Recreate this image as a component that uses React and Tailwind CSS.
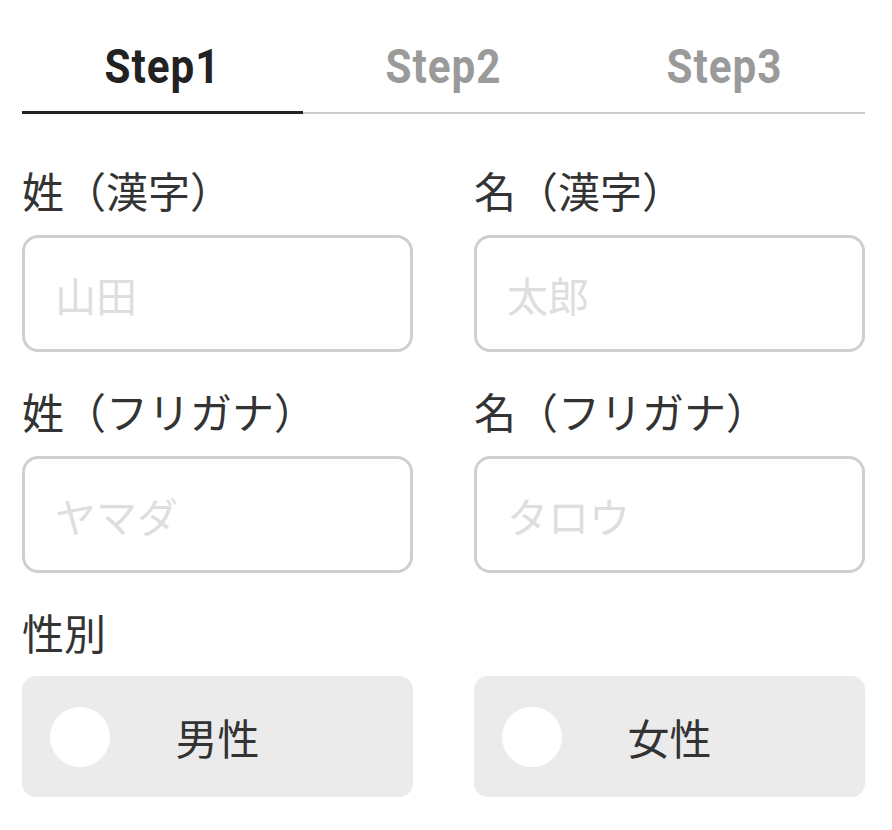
import React, { useState } from 'react';

const steps = ['Step1', 'Step2', 'Step3'];

const fields = [
  { label: '姓（漢字）', placeholder: '山田' },
  { label: '名（漢字）', placeholder: '太郎' },
  { label: '姓（フリガナ）', placeholder: 'ヤマダ' },
  { label: '名（フリガナ）', placeholder: 'タロウ' },
];

function Field({ label, placeholder }) {
  return (
    <div className="flex flex-col">
      <label className="text-[42px] leading-[42px] text-[#333] mb-[24px]">{label}</label>
      <input
        type="text"
        placeholder={placeholder}
        className="h-[117px] w-full rounded-[16px] border-[3px] border-[#cfcfcf] bg-white pl-[30px] text-[41px] text-[#333] outline-none placeholder:text-[#dedede] font-['Noto_Sans_CJK_JP',sans-serif]"
      />
    </div>
  );
}

export default function App() {
  const [activeStep] = useState(0);
  const [gender, setGender] = useState(null);

  return (
    <div className="min-h-screen bg-white pl-[22px] pr-[27px] font-['Noto_Sans_CJK_JP',sans-serif] [text-spacing-trim:space-all]">
      {/* Tabs */}
      <div className="flex pt-[42px]">
        {steps.map((step, i) => (
          <div key={step} className="flex-1 flex justify-center">
            <span
              className={`inline-block scale-x-[0.86] font-['Roboto',sans-serif] font-bold text-[49px] leading-[49px] tracking-wide ${
                i === activeStep ? 'text-[#222]' : 'text-[#9a9a9a]'
              }`}
            >
              {step}
            </span>
          </div>
        ))}
      </div>
      <div className="mt-[20px] flex items-end">
        <div className="h-[3px] w-1/3 bg-[#222]" />
        <div className="h-[2px] flex-1 bg-[#cccccc]" />
      </div>

      {/* Form */}
      <div className="mt-[55px] grid grid-cols-2 gap-x-[61px] gap-y-[38px]">
        {fields.map((f) => (
          <Field key={f.label} label={f.label} placeholder={f.placeholder} />
        ))}
      </div>

      <div className="mt-[38px]">
        <div className="text-[42px] leading-[42px] text-[#333] mb-[23px]">性別</div>
        <div className="grid grid-cols-2 gap-x-[61px]">
          {['男性', '女性'].map((g) => (
            <button
              key={g}
              type="button"
              onClick={() => setGender(g)}
              className="h-[121px] rounded-[14px] bg-[#ebebeb] px-[28px] grid grid-cols-[1fr_auto_1fr] items-center"
            >
              <span
                className={`h-[60px] w-[60px] rounded-full bg-white ${
                  gender === g ? 'border-[18px] border-[#333]' : ''
                }`}
              />
              <span className="text-[42px] leading-[42px] text-[#333]">{g}</span>
              <span />
            </button>
          ))}
        </div>
      </div>
    </div>
  );
}
